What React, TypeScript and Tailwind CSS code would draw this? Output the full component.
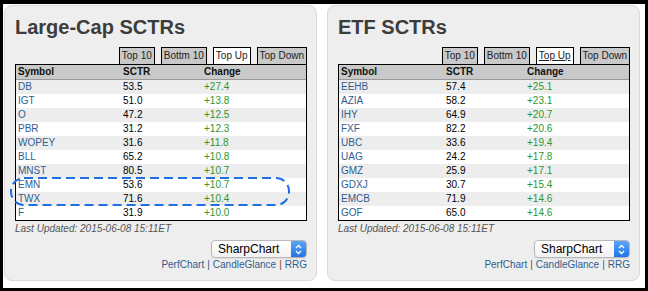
import React from "react";

type Row = [string, string, string];

const largeCap: Row[] = [
  ["DB", "53.5", "+27.4"],
  ["IGT", "51.0", "+13.8"],
  ["O", "47.2", "+12.5"],
  ["PBR", "31.2", "+12.3"],
  ["WOPEY", "31.6", "+11.8"],
  ["BLL", "65.2", "+10.8"],
  ["MNST", "80.5", "+10.7"],
  ["EMN", "53.6", "+10.7"],
  ["TWX", "71.6", "+10.4"],
  ["F", "31.9", "+10.0"],
];

const etf: Row[] = [
  ["EEHB", "57.4", "+25.1"],
  ["AZIA", "58.2", "+23.1"],
  ["IHY", "64.9", "+20.7"],
  ["FXF", "82.2", "+20.6"],
  ["UBC", "33.6", "+19.4"],
  ["UAG", "24.2", "+17.8"],
  ["GMZ", "25.9", "+17.1"],
  ["GDXJ", "30.7", "+15.4"],
  ["EMCB", "71.9", "+14.6"],
  ["GOF", "65.0", "+14.6"],
];

function Tabs({ underline }: { underline?: boolean }) {
  const tab =
    "h-[17px] border border-b-0 border-black px-[2px] text-[10px] leading-[15px] text-[#222]";
  return (
    <div className="flex justify-end gap-[6px]">
      <div className={`${tab} bg-[#c9c9c9]`}>Top 10</div>
      <div className={`${tab} bg-[#c9c9c9]`}>Bottm 10</div>
      <div className={`${tab} bg-white ${underline ? "underline" : ""}`}>Top Up</div>
      <div className={`${tab} bg-[#c9c9c9]`}>Top Down</div>
    </div>
  );
}

function SelectBox() {
  return (
    <div className="flex h-[18px] w-[96px] overflow-hidden rounded-[4px] border border-[#b8b8b8] bg-gradient-to-b from-white to-[#f2f2f2] shadow-[0_1px_1px_rgba(0,0,0,0.08)]">
      <div className="flex-1 pl-[6px] text-[12px] leading-[16px] text-black">SharpChart</div>
      <div className="flex w-[15px] items-center justify-center bg-gradient-to-b from-[#5aa6f7] to-[#2173e6]">
        <svg width="7" height="11" viewBox="0 0 7 11" fill="none">
          <path d="M1 4 L3.5 1.5 L6 4" stroke="white" strokeWidth="1.3" />
          <path d="M1 7 L3.5 9.5 L6 7" stroke="white" strokeWidth="1.3" />
        </svg>
      </div>
    </div>
  );
}

function Panel({
  title,
  rows,
  underline,
  circled,
  sepA,
  sepB,
}: {
  title: string;
  rows: Row[];
  underline?: boolean;
  circled?: boolean;
  sepA: string;
  sepB: string;
}) {
  return (
    <div className="relative flex h-[276px] w-[313px] flex-col rounded-[8px] border border-[#dadada] bg-[#eeeeee] pl-[10px] pr-[9px] pt-[10px]">
      <h2 className="text-[20px] font-bold leading-[23px] text-[#3c3c3c]">{title}</h2>
      <div className="mt-[8px]">
        <Tabs underline={underline} />
      </div>
      <div className="border border-black bg-white">
        <div className="grid h-[15px] grid-cols-[105px_81px_1fr] border-b border-[#999] bg-[#c9c9c9] pl-[2px] text-[10px] font-bold leading-[14px] text-[#111]">
          <span>Symbol</span>
          <span>SCTR</span>
          <span>Change</span>
        </div>
        {rows.map(([sym, sctr, chg], i) => (
          <div
            key={sym}
            className={`grid h-[14px] grid-cols-[105px_81px_1fr] pl-[2px] text-[10px] leading-[14px] ${i % 2 === 0 ? "bg-[#ededed]" : "bg-white"}`}
          >
            <span className="text-[#2f5d8f]">{sym}</span>
            <span className="text-black">{sctr}</span>
            <span className="text-[#2e962e]">{chg}</span>
          </div>
        ))}
      </div>
      <p className="mt-[2px] text-[10px] italic leading-[12px] text-[#555]">Last Updated: 2015-06-08 15:11ET</p>
      <div className="mt-[5px] flex justify-end">
        <SelectBox />
      </div>
      <div className="mt-[1px] flex justify-end text-[10px] leading-[12px] text-[#2f5d8f]">
        <span>PerfChart</span>
        <span className={`px-[3px] ${sepA}`}>|</span>
        <span>CandleGlance</span>
        <span className={`px-[3px] ${sepB}`}>|</span>
        <span>RRG</span>
      </div>
      {circled && (
        <svg className="pointer-events-none absolute left-[5px] top-[171px]" width="281" height="30" viewBox="0 0 281 30">
          <rect x="1" y="1" width="278" height="27" rx="13" ry="13" fill="none" stroke="#1f6fe3" strokeWidth="2" strokeDasharray="9 5" />
        </svg>
      )}
    </div>
  );
}

export default function App() {
  return (
    <div className="h-[291px] w-[648px] border-[3px] border-t-[4px] border-black bg-white pl-[1px] pt-[1px] font-['Liberation_Sans',Arial,sans-serif]">
      <div className="flex gap-[10px]">
        <Panel title="Large-Cap SCTRs" rows={largeCap} circled sepA="text-[#2f5d8f]" sepB="text-[#8a3a3a]" />
        <Panel title="ETF SCTRs" rows={etf} underline sepA="text-[#8a3a3a]" sepB="text-[#2f5d8f]" />
      </div>
    </div>
  );
}
